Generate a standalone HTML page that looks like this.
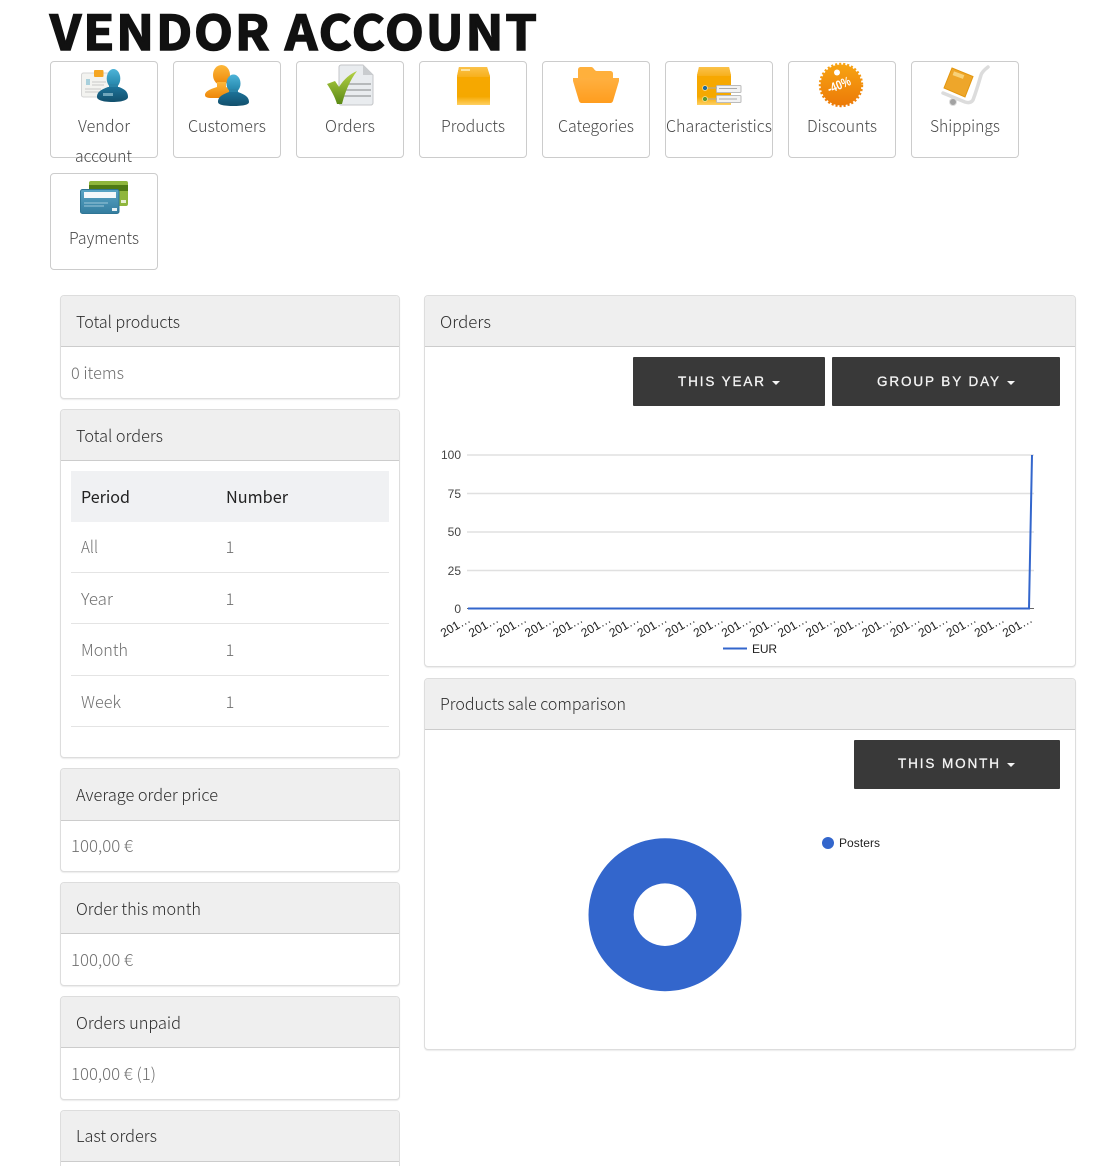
<!DOCTYPE html>
<html lang="en"><head><meta charset="utf-8"><title>Vendor account</title>
<style>
html,body{margin:0;padding:0;background:#fff;width:1102px;height:1166px;overflow:hidden}
#p{position:relative;width:1102px;height:1166px;overflow:hidden}
.tile{position:absolute;width:106px;height:95px;border:1px solid #ccc;border-radius:4px;background:#fff}
.panel{position:absolute;box-sizing:border-box;border:1px solid #ddd;border-radius:4px;background:#fff;box-shadow:0 1px 1px rgba(0,0,0,.08);overflow:hidden}
.panel i{display:block;height:50px;background:#efefef;border-bottom:1px solid #ccc}
.btn{position:absolute;background:#393939;border-radius:1px;height:49px}
svg{position:absolute;left:0;top:0}
text{font-family:"Noto Sans CJK JP","Liberation Sans",sans-serif;font-weight:300}
.l{font-size:16.5px;fill:#4a4a4a}
.h{font-size:16.5px;fill:#2e2e2e}
.b{font-size:16.5px;fill:#707070}
.th{font-size:16.5px;fill:#222;font-weight:400}
.t{font-family:"Noto Sans CJK JP","Liberation Sans",sans-serif;font-weight:700;font-size:48px;letter-spacing:2px;fill:#111;stroke:#111;stroke-width:1.6}
.w{font-family:"Liberation Sans",sans-serif;font-size:13.5px;fill:#f4f4f4;font-weight:400;stroke:#f4f4f4;stroke-width:.3}
.c{font-family:"Liberation Sans",sans-serif;font-size:12px;fill:#444;font-weight:400}
.k{font-family:"Liberation Sans",sans-serif;font-size:12px;fill:#222;font-weight:400}
</style></head><body><div id="p">
<div class="tile" style="left:50px;top:61px"></div>
<div class="tile" style="left:173px;top:61px"></div>
<div class="tile" style="left:296px;top:61px"></div>
<div class="tile" style="left:419px;top:61px"></div>
<div class="tile" style="left:542px;top:61px"></div>
<div class="tile" style="left:665px;top:61px"></div>
<div class="tile" style="left:788px;top:61px"></div>
<div class="tile" style="left:911px;top:61px"></div>
<div class="tile" style="left:50px;top:173px"></div>

<div class="panel" style="left:60px;top:295px;width:340px;height:104px"><i></i></div>
<div class="panel" style="left:60px;top:409px;width:340px;height:349px"><i></i></div>
<div class="panel" style="left:60px;top:768px;width:340px;height:104px"><i style="height:51px"></i></div>
<div class="panel" style="left:60px;top:882px;width:340px;height:104px"><i></i></div>
<div class="panel" style="left:60px;top:996px;width:340px;height:104px"><i></i></div>
<div class="panel" style="left:60px;top:1110px;width:340px;height:56px;border-bottom:0;border-radius:4px 4px 0 0;box-shadow:none"><i></i></div>
<div class="panel" style="left:424px;top:295px;width:652px;height:372px"><i></i></div>
<div class="panel" style="left:424px;top:678px;width:652px;height:372px"><i></i></div>
<div style="position:absolute;left:71px;top:471px;width:318px;height:51px;background:#f0f1f3"></div>
<div style="position:absolute;left:71px;top:572px;width:318px;height:1px;background:#e4e4e4"></div>
<div style="position:absolute;left:71px;top:623px;width:318px;height:1px;background:#e4e4e4"></div>
<div style="position:absolute;left:71px;top:675px;width:318px;height:1px;background:#e4e4e4"></div>
<div style="position:absolute;left:71px;top:726px;width:318px;height:1px;background:#e4e4e4"></div>
<div class="btn" style="left:633px;top:357px;width:192px"></div>
<div class="btn" style="left:832px;top:357px;width:228px"></div>
<div class="btn" style="left:854px;top:740px;width:206px"></div>

<svg width="1102" height="1166" viewBox="0 0 1102 1166" xmlns="http://www.w3.org/2000/svg">
<defs>
<linearGradient id="bl" x1="0" y1="0" x2="0" y2="1"><stop offset="0" stop-color="#4db4d8"/><stop offset="1" stop-color="#1f7fa5"/></linearGradient>
<linearGradient id="dk" x1="0" y1="0" x2="0" y2="1"><stop offset="0" stop-color="#1d7298"/><stop offset="1" stop-color="#124f6c"/></linearGradient>
<linearGradient id="or" x1="0" y1="0" x2="0" y2="1"><stop offset="0" stop-color="#fdb83a"/><stop offset="1" stop-color="#ee8608"/></linearGradient>
<linearGradient id="bx" x1="0" y1="0" x2="0" y2="1"><stop offset="0" stop-color="#f8a800"/><stop offset=".78" stop-color="#f5a800"/><stop offset="1" stop-color="#ffd062"/></linearGradient>
<linearGradient id="bt" x1="0" y1="0" x2="0" y2="1"><stop offset="0" stop-color="#fbc24a"/><stop offset="1" stop-color="#f7b01c"/></linearGradient>
<linearGradient id="gr" x1="0" y1="0" x2="0" y2="1"><stop offset="0" stop-color="#b5d245"/><stop offset="1" stop-color="#5b8a16"/></linearGradient>
<linearGradient id="fo" x1="0" y1="0" x2="0" y2="1"><stop offset="0" stop-color="#ffb040"/><stop offset="1" stop-color="#ff9d1e"/></linearGradient>
<linearGradient id="dc" x1="0" y1="0" x2="0" y2="1"><stop offset="0" stop-color="#f7a312"/><stop offset="1" stop-color="#ec7a08"/></linearGradient>
<linearGradient id="cb" x1="0" y1="0" x2="0" y2="1"><stop offset="0" stop-color="#5aa5c6"/><stop offset="1" stop-color="#347d9f"/></linearGradient>
</defs>

<text class="t" x="50" y="50" textLength="489" lengthAdjust="spacingAndGlyphs">VENDOR ACCOUNT</text>

<!-- Vendor icon -->
<rect x="81.500" y="73" width="29" height="24" rx="2" fill="#f3f3f0" stroke="#d4d4d4"/>
<rect x="94" y="70" width="9.500" height="7" rx="1" fill="#f5a623"/>
<rect x="86" y="79" width="4" height="6" fill="#a9d0dc"/>
<path d="M92 82h14M92 85h12M85 89h16M85 92h14" stroke="#c8c8c8" stroke-width="1"/>
<ellipse cx="113.500" cy="78.500" rx="6.800" ry="9.500" fill="url(#bl)"/>
<path d="M109 84h9v4h-9z" fill="#2a84a8"/>
<path d="M97 97c0-6 6-8 11-10h11c5 2 9 4 9 10 0 3-6 5-15.500 5S97 100 97 97z" fill="url(#dk)"/>
<rect x="103" y="93" width="10" height="3" fill="#6fa6bb"/>

<!-- Customers icon -->
<ellipse cx="221.500" cy="75" rx="8.500" ry="10" fill="url(#or)"/>
<path d="M217 82h9v5l5 2v9h-19c-5 0-7-1-7-3 0-4 6-6 12-8z" fill="url(#or)"/>
<ellipse cx="233.500" cy="83.500" rx="7" ry="9" fill="url(#bl)"/>
<path d="M229 89h9v4h-9z" fill="#2a84a8"/>
<path d="M218 102c0-6 6-8 11-10h9c5 2 11 4 11 10 0 3-7 4-15.500 4S218 105 218 102z" fill="url(#dk)"/>

<!-- Orders icon -->
<path d="M339 67c0-1 1-2 2-2h22l10 10v28c0 1-1 2-2 2h-30c-1 0-2-1-2-2z" fill="#e9ecef" stroke="#c4c6c8"/>
<path d="M363 65l10 10h-10z" fill="#c9cccf"/>
<path d="M347 84h24M345 90h26M343 96h28" stroke="#a5a8aa" stroke-width="1.500"/>
<path d="M327 84l8-3 4 6c5-8 11-13 18-16-7 9-12 21-15 33h-5c-2-7-6-14-10-20z" fill="url(#gr)"/>

<!-- Products icon -->
<path d="M459 67h28l3 9v29h-33V76z" fill="url(#bx)"/>
<path d="M459 67h28l3 10h-33z" fill="url(#bt)"/>
<rect x="461" y="69" width="9" height="2" fill="#fde3a0"/>

<!-- Categories icon -->
<path d="M578 70c0-2 1-3 3-3h10c3 0 3 4 6 4h13c2 0 3 1 3 3v6h-35z" fill="#ffb03c"/>
<path d="M573 78h46v3l-6 20c-.500 1-1 2-3 2h-28c-2 0-2.500-1-3-2l-6-20z" fill="url(#fo)"/>

<!-- Characteristics icon -->
<path d="M699 67h30l2 8v30h-34V75z" fill="url(#bx)"/>
<path d="M699 67h30l2 9h-34z" fill="url(#bt)"/>
<rect x="716.500" y="85.500" width="24.500" height="7" rx="1" fill="#f2f2f2" stroke="#bbb"/>
<rect x="716.500" y="95.500" width="24.500" height="7" rx="1" fill="#f2f2f2" stroke="#bbb"/>
<path d="M707 88h10M707 99h10M719 88.500h18M719 99h18" stroke="#aaa" stroke-width="1"/>
<circle cx="705" cy="88" r="2.500" fill="#1d6a9a" stroke="#fde3a0" stroke-width=".7"/>
<circle cx="705" cy="99" r="2.500" fill="#5b9a2e" stroke="#fde3a0" stroke-width=".7"/>

<!-- Discounts icon -->
<circle cx="841" cy="85" r="20.500" fill="url(#dc)"/>
<circle cx="841" cy="85" r="20.800" fill="none" stroke="url(#dc)" stroke-width="2.800" stroke-dasharray="2.100 1.900"/>
<circle cx="837" cy="72.500" r="3" fill="#fff"/>
<text transform="translate(829.500 93.500) rotate(-22)" style="font-family:'Liberation Sans',sans-serif;font-weight:700;font-size:13px;fill:#fff" textLength="24" lengthAdjust="spacingAndGlyphs">-40%</text>

<!-- Shippings icon -->
<path d="M943 93l22 9c3 1 6 1 8-2 3-8 6-18 8-25 1-3 3-5 7-8" fill="none" stroke="#dcdcdc" stroke-width="3.500" stroke-linecap="round" stroke-linejoin="round"/>
<path d="M952 68l21 8.500-8 20.500-21-9z" fill="#eea62a" stroke="#e2960e"/>
<rect x="953" y="73" width="11" height="4" transform="rotate(20 958 75)" fill="#f8d27a"/>
<circle cx="953" cy="102" r="3.500" fill="#a2a2a2" stroke="#ddd"/>

<!-- Payments icon -->
<rect x="89" y="181" width="39" height="25" rx="2" fill="#8fb63c"/>
<rect x="89" y="185" width="39" height="6" fill="#4f7a14"/>
<rect x="121" y="200" width="5" height="3" fill="#e6efcf"/>
<rect x="80.500" y="189.500" width="38.500" height="24" rx="2" fill="url(#cb)" stroke="#2f7595"/>
<rect x="84" y="192" width="32" height="6" fill="#f4f8fa"/>
<path d="M84 203h24M84 206h20" stroke="#9cc8da" stroke-width="1"/>
<rect x="112" y="208" width="5" height="3" fill="#e6f0f4"/>

<text class="l" x="78" y="132" textLength="52" lengthAdjust="spacingAndGlyphs">Vendor</text>
<text class="l" x="75" y="162" textLength="57" lengthAdjust="spacingAndGlyphs">account</text>
<text class="l" x="188" y="132" textLength="78" lengthAdjust="spacingAndGlyphs">Customers</text>
<text class="l" x="325" y="132" textLength="50" lengthAdjust="spacingAndGlyphs">Orders</text>
<text class="l" x="441" y="132" textLength="64" lengthAdjust="spacingAndGlyphs">Products</text>
<text class="l" x="558" y="132" textLength="76" lengthAdjust="spacingAndGlyphs">Categories</text>
<text class="l" x="666" y="132" textLength="106" lengthAdjust="spacingAndGlyphs">Characteristics</text>
<text class="l" x="807" y="132" textLength="70" lengthAdjust="spacingAndGlyphs">Discounts</text>
<text class="l" x="930" y="132" textLength="70" lengthAdjust="spacingAndGlyphs">Shippings</text>
<text class="l" x="69" y="244" textLength="70" lengthAdjust="spacingAndGlyphs">Payments</text>

<text class="h" x="76" y="328" textLength="104" lengthAdjust="spacingAndGlyphs">Total products</text>
<text class="b" x="71" y="379" textLength="53" lengthAdjust="spacingAndGlyphs">0 items</text>
<text class="h" x="76" y="442" textLength="87" lengthAdjust="spacingAndGlyphs">Total orders</text>
<text class="th" x="81" y="503" textLength="49" lengthAdjust="spacingAndGlyphs">Period</text>
<text class="th" x="226" y="503" textLength="62" lengthAdjust="spacingAndGlyphs">Number</text>
<text class="b" x="81" y="553" textLength="17" lengthAdjust="spacingAndGlyphs">All</text>
<text class="b" x="225.500" y="553">1</text>
<text class="b" x="81" y="605" textLength="32" lengthAdjust="spacingAndGlyphs">Year</text>
<text class="b" x="225.500" y="605">1</text>
<text class="b" x="81" y="656" textLength="47" lengthAdjust="spacingAndGlyphs">Month</text>
<text class="b" x="225.500" y="656">1</text>
<text class="b" x="81" y="708" textLength="40" lengthAdjust="spacingAndGlyphs">Week</text>
<text class="b" x="225.500" y="708">1</text>
<text class="h" x="76" y="801" textLength="142" lengthAdjust="spacingAndGlyphs">Average order price</text>
<text class="b" x="71" y="852" textLength="62" lengthAdjust="spacingAndGlyphs">100,00 €</text>
<text class="h" x="76" y="915" textLength="125" lengthAdjust="spacingAndGlyphs">Order this month</text>
<text class="b" x="71" y="966" textLength="62" lengthAdjust="spacingAndGlyphs">100,00 €</text>
<text class="h" x="76" y="1029" textLength="105" lengthAdjust="spacingAndGlyphs">Orders unpaid</text>
<text class="b" x="71" y="1080" textLength="85" lengthAdjust="spacingAndGlyphs">100,00 € (1)</text>
<text class="h" x="76" y="1142" textLength="81" lengthAdjust="spacingAndGlyphs">Last orders</text>

<text class="h" x="440" y="328" textLength="51" lengthAdjust="spacingAndGlyphs">Orders</text>
<text class="h" x="440" y="710" textLength="186" lengthAdjust="spacingAndGlyphs">Products sale comparison</text>

<text class="w" x="678" y="386" textLength="86">THIS YEAR</text>
<path d="M772 381h8l-4 4z" fill="#f4f4f4"/>
<text class="w" x="877" y="386" textLength="122">GROUP BY DAY</text>
<path d="M1007 381h8l-4 4z" fill="#f4f4f4"/>
<text class="w" x="898" y="768" textLength="101">THIS MONTH</text>
<path d="M1007 763h8l-4 4z" fill="#f4f4f4"/>

<!-- line chart -->
<path d="M467 455h567M467 493.500h567M467 532h567M467 570.500h567" stroke="#e0e0e0" stroke-width="1.500"/>
<path d="M467 608.500h567" stroke="#666" stroke-width="1"/>
<path d="M468 608.500H1029L1032 455" fill="none" stroke="#3366cc" stroke-width="2"/>
<text class="c" x="461" y="459" text-anchor="end">100</text>
<text class="c" x="461" y="498" text-anchor="end">75</text>
<text class="c" x="461" y="536" text-anchor="end">50</text>
<text class="c" x="461" y="575" text-anchor="end">25</text>
<text class="c" x="461" y="613" text-anchor="end">0</text>
<g>
<text class="k" transform="translate(443.500 637.500) rotate(-30)">201…</text>
<text class="k" transform="translate(471.600 637.500) rotate(-30)">201…</text>
<text class="k" transform="translate(499.700 637.500) rotate(-30)">201…</text>
<text class="k" transform="translate(527.800 637.500) rotate(-30)">201…</text>
<text class="k" transform="translate(555.900 637.500) rotate(-30)">201…</text>
<text class="k" transform="translate(584 637.500) rotate(-30)">201…</text>
<text class="k" transform="translate(612.100 637.500) rotate(-30)">201…</text>
<text class="k" transform="translate(640.200 637.500) rotate(-30)">201…</text>
<text class="k" transform="translate(668.300 637.500) rotate(-30)">201…</text>
<text class="k" transform="translate(696.400 637.500) rotate(-30)">201…</text>
<text class="k" transform="translate(724.500 637.500) rotate(-30)">201…</text>
<text class="k" transform="translate(752.600 637.500) rotate(-30)">201…</text>
<text class="k" transform="translate(780.700 637.500) rotate(-30)">201…</text>
<text class="k" transform="translate(808.800 637.500) rotate(-30)">201…</text>
<text class="k" transform="translate(836.900 637.500) rotate(-30)">201…</text>
<text class="k" transform="translate(865 637.500) rotate(-30)">201…</text>
<text class="k" transform="translate(893.100 637.500) rotate(-30)">201…</text>
<text class="k" transform="translate(921.200 637.500) rotate(-30)">201…</text>
<text class="k" transform="translate(949.300 637.500) rotate(-30)">201…</text>
<text class="k" transform="translate(977.400 637.500) rotate(-30)">201…</text>
<text class="k" transform="translate(1005.500 637.500) rotate(-30)">201…</text>
</g>
<rect x="723" y="647.500" width="24" height="2" fill="#3366cc"/>
<text class="k" x="752" y="653" textLength="25">EUR</text>

<!-- donut -->
<path fill-rule="evenodd" fill="#3366cc" d="M665 838.200a76.500 76.500 0 1 0 .01 0zM665 883.400a31.300 31.300 0 1 1-.01 0z"/>
<circle cx="828" cy="843" r="6" fill="#3366cc"/>
<text class="k" x="839" y="847" textLength="41">Posters</text>
</svg>
</div></body></html>
